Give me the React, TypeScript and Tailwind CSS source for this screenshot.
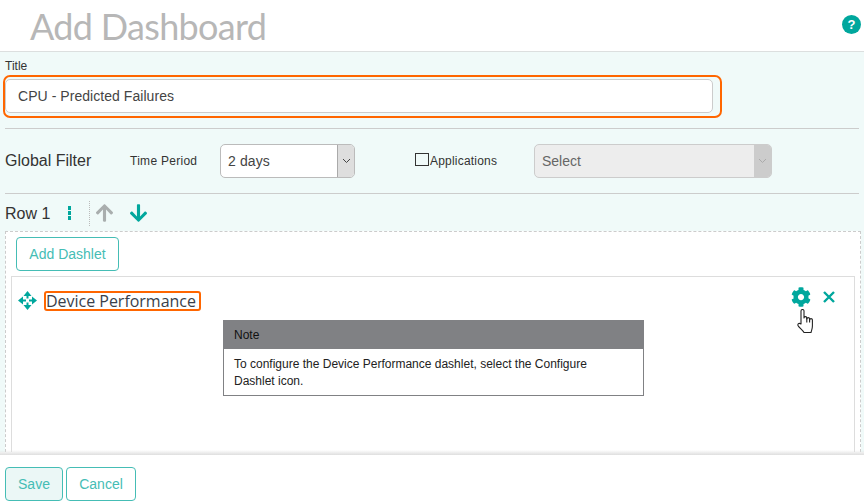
import { FaArrowUp, FaArrowDown, FaCog } from "react-icons/fa";

function Chevron() {
  return (
    <svg width="9" height="6" viewBox="0 0 9 6" fill="none" stroke="currentColor" strokeWidth="1">
      <path d="M1 1l3.5 3.5L8 1" />
    </svg>
  );
}

function MoveIcon() {
  return (
    <svg width="19" height="19" viewBox="0 0 19 19" className="text-[#00a79d] shrink-0" fill="currentColor" stroke="none">
      <path d="M9.5 0L13.5 5H5.5z" />
      <path d="M9.5 19L13.5 14H5.5z" />
      <path d="M0 9.5L5 5.5v8z" />
      <path d="M19 9.5L14 5.5v8z" />
      <path d="M4 8.5h4v2H4zM11 8.5h4v2h-4z" />
      <path d="M8.5 4h2v3.5h-2zM8.5 11.5h2V15h-2z" />
    </svg>
  );
}

function Hand() {
  return (
    <svg width="18" height="25" viewBox="0 0 18 25" className="absolute left-[785px] top-[32px]" fill="#ffffff" stroke="#222222" strokeWidth="1.1" strokeLinejoin="round">
      <path d="M4 15V2a1.5 1.5 0 0 1 3 0V9a1.4 1.4 0 0 1 2.8 0V10a1.4 1.4 0 0 1 2.8 0V11a1.4 1.4 0 0 1 2.8 0V17C15.4 20 14.6 21 14 23.5H7C5.5 21 1.8 18.5 1 16.5C.4 14.5 2.5 13.8 4 15Z" />
      <path d="M9.8 9v4.5M12.6 10v3.5" fill="none" />
    </svg>
  );
}

export default function App() {
  return (
    <div className="w-[864px] h-[504px] overflow-hidden flex flex-col bg-white text-[#333] font-['Liberation_Sans',sans-serif]">
      <header className="h-[51px] shrink-0 flex items-center justify-between pl-[30px] pr-[3px] bg-white">
        <h1 className="text-[36px] leading-[50px] font-normal text-[#b7b7b7] tracking-[-0.68px] font-['Lato',sans-serif]">Add Dashboard</h1>
        <div className="w-[19px] h-[19px] rounded-full bg-[#00a79d] flex items-center justify-center text-white text-[13px] font-bold leading-none mb-[3px]">?</div>
      </header>

      <main className="flex-1 min-h-0 overflow-hidden bg-[#f0faf9] border-t border-[#dcdfdf] px-[5px] flex flex-col">
        <label className="text-[12px] leading-[14px] text-[#333] mt-[7px]">Title</label>
        <div className="mt-[2px] -ml-[2px] w-[719px] h-[43px] border-2 border-[#ff6600] rounded-[7px] pl-0 pt-[2px] shrink-0">
          <div className="w-[708px] h-[34px] bg-white border border-[#cccccc] rounded-[5px] flex items-center pl-[12px] text-[14px] tracking-[0.05px] text-[#444]">CPU - Predicted Failures</div>
        </div>

        <div className="mt-[10px] border-t border-[#cccccc] h-[65px] shrink-0 flex items-center">
          <span className="text-[16px] w-[125px] text-[#333]">Global Filter</span>
          <span className="text-[12px] w-[90px] text-[#333] tracking-[0.28px]">Time Period</span>
          <div className="w-[135px] h-[34px] bg-white border border-[#bbbbbb] rounded-[5px] flex items-center justify-between overflow-hidden">
            <span className="pl-[7px] text-[14px] text-[#444] tracking-[0.1px]">2 days</span>
            <span className="w-[17px] h-full bg-[#dedede] border-l border-[#aaaaaa] flex items-center justify-center text-[#444]"><Chevron /></span>
          </div>
          <span className="w-[14px] h-[13px] border border-[#333] ml-[60px] mr-[1px] mb-[3px]"></span>
          <span className="text-[12px] w-[104px] text-[#333] tracking-[0.2px]">Applications</span>
          <div className="w-[238px] h-[34px] bg-[#ededed] border border-[#cccccc] rounded-[5px] flex items-center justify-between overflow-hidden">
            <span className="pl-[7px] text-[14px] text-[#666]">Select</span>
            <span className="w-[17px] h-full bg-[#cccccc] flex items-center justify-center text-[#aaa]"><Chevron /></span>
          </div>
        </div>

        <div className="border-t border-[#cccccc] h-[38px] shrink-0 flex items-center">
          <span className="text-[16px] w-[63px] text-[#333] mt-[2px]">Row 1</span>
          <span className="flex flex-col gap-[1px] w-[21px] mt-[1px]">
            <span className="w-[3px] h-[4px] bg-[#00a79d]"></span>
            <span className="w-[3px] h-[4px] bg-[#00a79d]"></span>
            <span className="w-[3px] h-[4px] bg-[#00a79d]"></span>
          </span>
          <span className="h-[25px] border-l border-dotted border-[#bbbbbb] mr-[5px] mt-[1px]"></span>
          <FaArrowUp className="text-[#a9aeae] w-[19px] h-[20px] mr-[15px] mt-[1px]" />
          <FaArrowDown className="text-[#00a79d] w-[19px] h-[20px] mt-[1px]" />
        </div>

        <section className="flex-1 min-h-0 w-[856px] bg-white border border-dashed border-[#cccccc] border-b-0 px-[5px] pt-[5px] flex flex-col">
          <button className="ml-[5px] w-[103px] h-[34px] shrink-0 border border-[#45bdb5] rounded-[4px] text-[14px] text-[#45bdb5] bg-white">Add Dashlet</button>
          <div className="relative mt-[5px] flex-1 w-[844px] border border-b-0 border-[#dddddd] bg-white">
            <div className="h-[43px] flex items-start pl-[6px] pt-[14px]">
              <MoveIcon />
              <span className="ml-[7px] h-[20px] border-2 border-[#ff6600] rounded-[3px] pl-0 pr-[3px] flex items-center text-[16px] text-[#3a3f4a] font-['Open_Sans',sans-serif] tracking-[-0.02px]">Device Performance</span>
              <FaCog className="ml-auto -mt-[4px] text-[#00a79d] w-[20px] h-[20px]" />
              <svg width="14" height="14" viewBox="0 0 14 14" className="-mt-[1px] ml-[11px] mr-[18px] text-[#00a79d]" fill="none" stroke="currentColor" strokeWidth="2.4"><path d="M2 2l10 10M12 2L2 12" /></svg>
            </div>
            <div className="ml-[211px] w-[421px] border border-[#808184] bg-white">
              <div className="h-[28px] bg-[#808184] flex items-center pl-[10px] text-[12px] text-[#111]">Note</div>
              <p className="pl-[10px] pr-[30px] pt-[7px] pb-[5px] text-[12px] leading-[17px] text-[#222]">To configure the Device Performance dashlet, select the Configure Dashlet icon.</p>
            </div>
            <Hand />
          </div>
        </section>
      </main>

      <footer className="h-[52px] shrink-0 bg-white relative px-[5px] pt-[15px] flex gap-[3px] items-start">
        <div className="absolute left-0 right-0 -top-[2px] h-[5px] bg-gradient-to-b from-[#f5f5f500] to-[#dedede]"></div>
        <button className="w-[58px] h-[34px] border border-[#45bdb5] rounded-[4px] bg-[#ebf7f6] text-[14px] text-[#45bdb5]">Save</button>
        <button className="w-[70px] h-[34px] border border-[#45bdb5] rounded-[4px] bg-white text-[14px] text-[#45bdb5]">Cancel</button>
      </footer>
    </div>
  );
}
